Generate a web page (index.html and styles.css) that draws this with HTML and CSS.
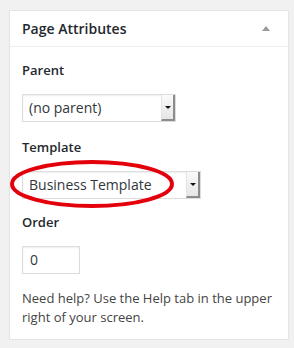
FILE: index.html
```html
<!DOCTYPE html>
<html lang="en">
<head>
    <meta charset="UTF-8">
    <title>Page Attributes</title>
    <link rel="stylesheet" href="styles.css">
</head>
<body>
    <div class="postbox">
        <div class="postbox-header">
            <h2>Page Attributes</h2>
            <span class="toggle"></span>
        </div>
        <div class="inside">
            <p class="field-label">Parent</p>
            <div class="dropdown parent">
                <span class="value">(no parent)</span>
                <span class="arrow"></span>
            </div>

            <p class="field-label">Template</p>
            <div class="template-wrap">
                <div class="dropdown template">
                    <span class="value">Business Template</span>
                    <span class="arrow"></span>
                </div>
                <!-- red marker drawn over the select -->
                <svg class="highlight" width="164" height="48" viewBox="0 0 164 48">
                    <ellipse cx="82" cy="24" rx="80" ry="22" fill="none" stroke="#e3000b" stroke-width="4"/>
                </svg>
            </div>

            <p class="field-label">Order</p>
            <div class="order-input">0</div>

            <p class="help">Need help? Use the Help tab in the upper right of your screen.</p>
        </div>
    </div>
</body>
</html>
```

FILE: styles.css
```css
body {
    font-family: "Open Sans", "Liberation Sans", sans-serif;
    margin: 0;
    padding: 10px 5px 0 9px;
    background-color: #f1f1f1;
    color: #23282d;
}
.postbox {
    background-color: #fff;
    border: 1px solid #e5e5e5;
    box-shadow: 0 1px 1px rgba(0,0,0,0.04);
}
.postbox-header {
    display: flex;
    align-items: center;
    justify-content: space-between;
    height: 35px;
    padding: 0 12px;
    border-bottom: 1px solid #eee;
}
.postbox-header h2 {
    margin: 0;
    font-size: 14px;
    font-weight: 600;
    line-height: 1.4;
}
.toggle {
    width: 0;
    height: 0;
    margin-right: 6px;
    border-left: 4px solid transparent;
    border-right: 4px solid transparent;
    border-bottom: 5px solid #999;
}
.inside {
    padding: 14px 12px 12px;
}
.field-label {
    margin: 0 0 15px;
    font-size: 13px;
    font-weight: 600;
    line-height: 18px;
}
.dropdown {
    display: flex;
    align-items: stretch;
    height: 28px;
    box-sizing: border-box;
    border: 1px solid #ddd;
    box-shadow: inset 0 1px 2px rgba(0,0,0,0.07);
    margin-bottom: 16px;
}
.dropdown.parent {
    width: 154px;
}
.dropdown.template {
    width: 179px;
    margin-bottom: 0;
}
.dropdown .value {
    flex: 1;
    padding-left: 6px;
    font-size: 14px;
    line-height: 26px;
    color: #32373c;
}
.dropdown .arrow {
    position: relative;
    width: 11px;
    background: linear-gradient(#fafafa, #e6e6e6);
    border-left: 1px solid #e4e4e4;
    border-right: 2px solid #8c8c8c;
    border-bottom: 2px solid #8c8c8c;
}
.dropdown .arrow::after {
    content: "";
    position: absolute;
    left: 3px;
    top: 11px;
    border-left: 3px solid transparent;
    border-right: 3px solid transparent;
    border-top: 3px solid #111;
}
.template-wrap {
    position: relative;
    margin-bottom: 14px;
}
.highlight {
    position: absolute;
    left: -12px;
    top: -11px;
    overflow: visible;
}
.order-input {
    width: 58px;
    height: 28px;
    box-sizing: border-box;
    border: 1px solid #ddd;
    box-shadow: inset 0 1px 2px rgba(0,0,0,0.07);
    padding-left: 7px;
    font-size: 14px;
    line-height: 26px;
    color: #32373c;
    margin-bottom: 15px;
}
.help {
    margin: 0;
    font-size: 13px;
    line-height: 19px;
    color: #444;
}
```
